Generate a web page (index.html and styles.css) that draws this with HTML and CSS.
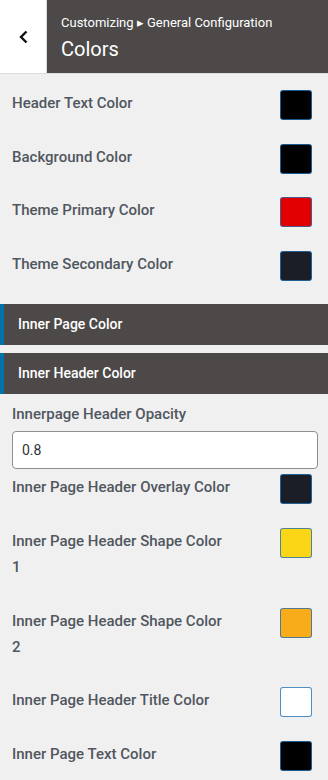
FILE: index.html
```html
<!DOCTYPE html>
<html lang="en">
<head>
  <meta charset="UTF-8">
  <title>Colors</title>
  <meta name="viewport" content="width=device-width, initial-scale=1.0">
  <link rel="stylesheet" href="styles.css">
</head>
<body>
  <header class="panel-head">
    <button class="back" aria-label="Back">
      <svg width="14" height="16" viewBox="0 0 14 16"><path d="M9.5 2.5 L4 8 L9.5 13.5" fill="none" stroke="#111" stroke-width="2.4"/></svg>
    </button>
    <div class="titles">
      <span class="crumb">Customizing ▸ General Configuration</span>
      <h2>Colors</h2>
    </div>
  </header>

  <ul class="controls">
    <li class="row"><span class="label">Header Text Color</span><span class="swatch" style="background:#000000"></span></li>
    <li class="row"><span class="label">Background Color</span><span class="swatch" style="background:#000000"></span></li>
    <li class="row"><span class="label">Theme Primary Color</span><span class="swatch" style="background:#e20000"></span></li>
    <li class="row"><span class="label">Theme Secondary Color</span><span class="swatch" style="background:#1b1e27"></span></li>
  </ul>

  <div class="section">Inner Page Color</div>
  <div class="section">Inner Header Color</div>

  <ul class="controls inner">
    <li class="field">
      <span class="label">Innerpage Header Opacity</span>
      <input type="text" value="0.8">
    </li>
    <li class="row"><span class="label">Inner Page Header Overlay Color</span><span class="swatch" style="background:#1b1e27"></span></li>
    <li class="row"><span class="label">Inner Page Header Shape Color 1</span><span class="swatch" style="background:#fbd616"></span></li>
    <li class="row"><span class="label">Inner Page Header Shape Color 2</span><span class="swatch" style="background:#f8ac1a"></span></li>
    <li class="row"><span class="label">Inner Page Header Title Color</span><span class="swatch" style="background:#ffffff"></span></li>
    <li class="row"><span class="label">Inner Page Text Color</span><span class="swatch" style="background:#000000"></span></li>
  </ul>
</body>
</html>
```
FILE: styles.css
```css
body {
  margin: 0;
  background: #f0f0f1;
  font-family: Roboto, "Liberation Sans", sans-serif;
  color: #50575e;
  overflow: hidden;
}
.panel-head {
  display: flex;
  height: 73px;
  border-bottom: 1px solid #dcdcde;
  background: #4d4948;
}
.back {
  width: 47px;
  border: none;
  border-right: 1px solid #dcdcde;
  background: #fff;
  padding: 0 0 0 2px;
  display: flex;
  align-items: center;
  justify-content: center;
}
.titles {
  padding: 15px 14px 0 14px;
  color: #fff;
}
.crumb {
  display: block;
  font-size: 13px;
  line-height: 16px;
}
.titles h2 {
  margin: 6px 0 0;
  font-size: 20px;
  font-weight: 400;
  line-height: 24px;
}
.controls {
  list-style: none;
  margin: 0;
  padding: 16px 10px 0 12px;
}
.controls.inner {
  padding-top: 7px;
}
.row {
  display: flex;
  justify-content: space-between;
  align-items: flex-start;
  margin-bottom: 23.6px;
}
.label {
  display: block;
  width: 218px;
  font-size: 15px;
  font-weight: 500;
  line-height: 26px;
  margin-bottom: 4px;
}
.swatch {
  flex: none;
  width: 30px;
  height: 28px;
  margin-right: 6px;
  border: 1px solid rgba(34, 113, 177, 0.8);
  border-radius: 3px;
}
.field {
  margin-bottom: 5px;
}
.field input {
  display: block;
  box-sizing: border-box;
  width: 100%;
  height: 38px;
  margin-top: 1px;
  padding: 0 9px;
  border: 1px solid #8c8f94;
  border-radius: 4px;
  background: #fff;
  font-family: Roboto, "Liberation Sans", sans-serif;
  font-size: 14px;
  color: #2c3338;
}
.section {
  background: #4d4948;
  border-left: 4px solid #0073aa;
  color: #fff;
  font-size: 14px;
  font-weight: 500;
  height: 41px;
  line-height: 40px;
  padding-left: 14px;
  margin-bottom: 8px;
}
.section + .controls {
  margin-top: -8px;
}
.controls + .section {
  margin-top: 3px;
}
```
